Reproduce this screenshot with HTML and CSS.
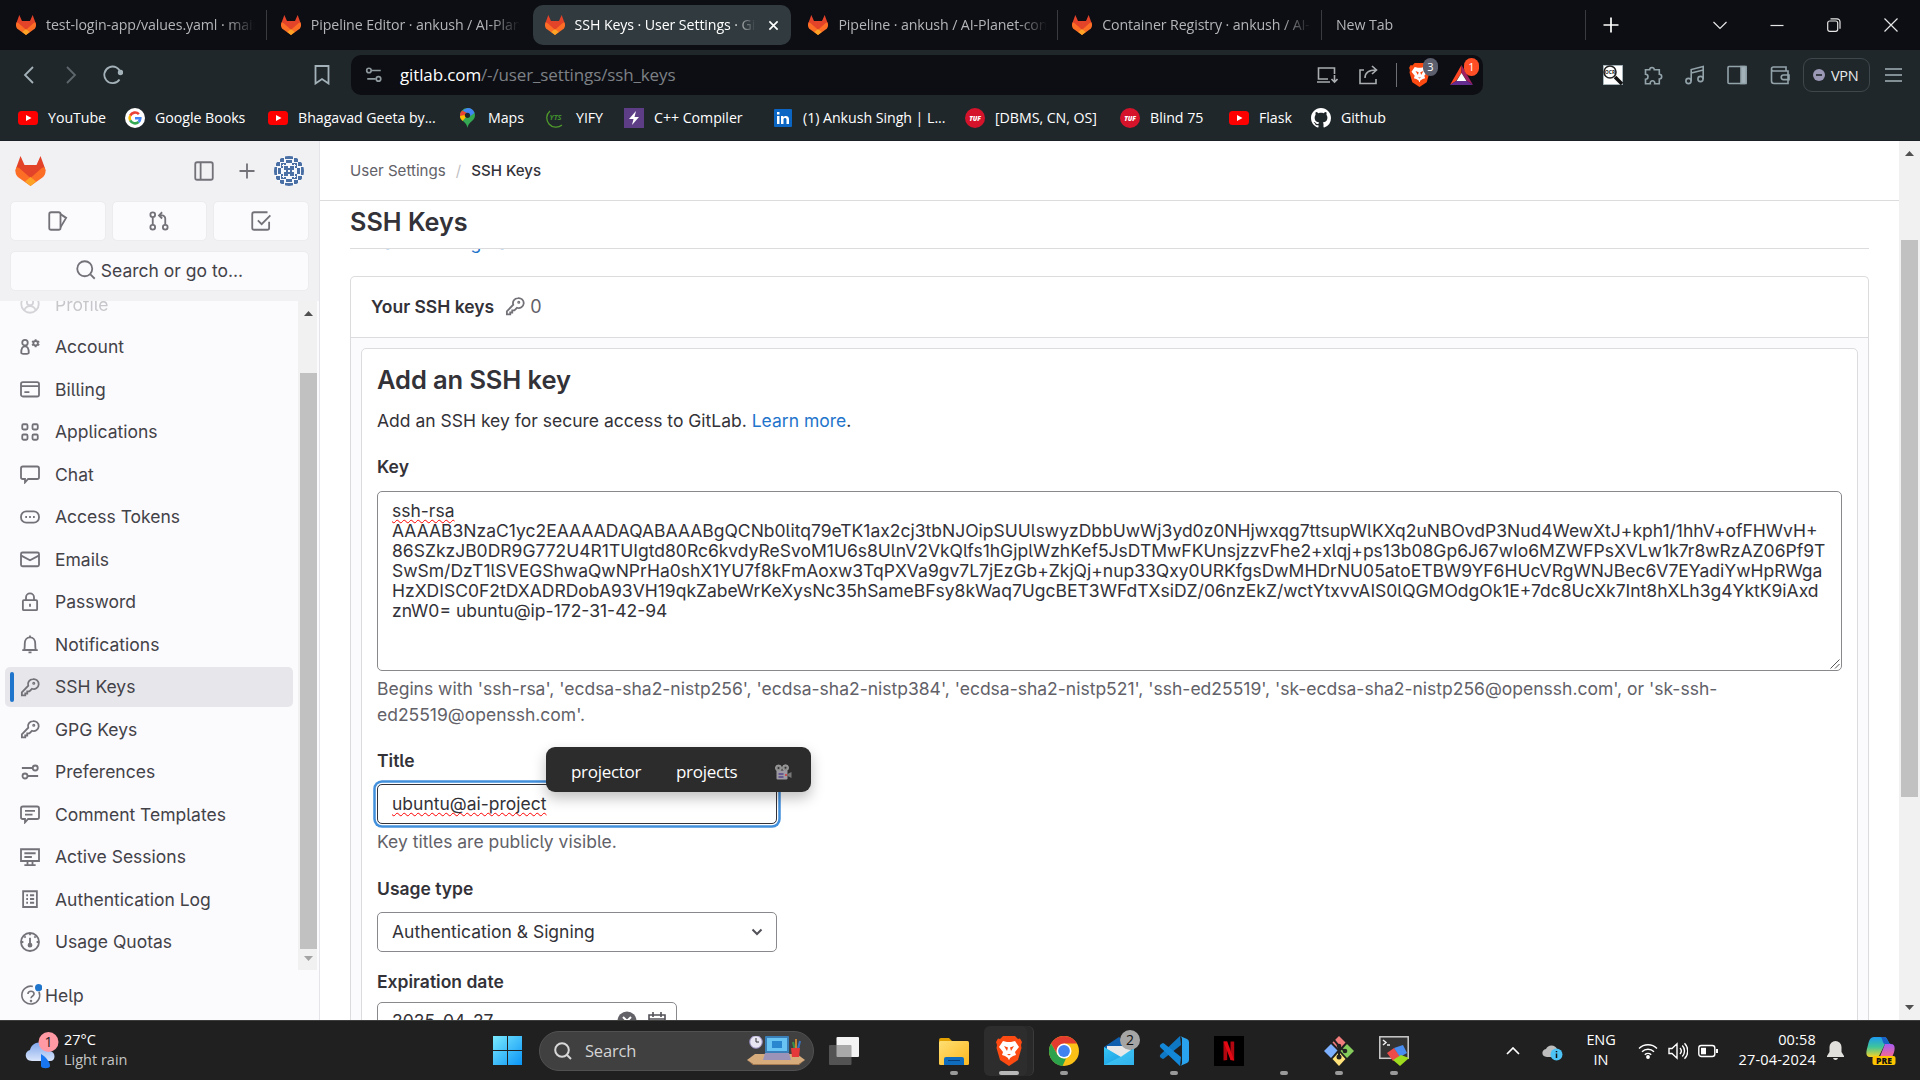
FILE: index.html
```html
<!DOCTYPE html>
<html lang="en">
<head>
<meta charset="utf-8">
<title>SSH Keys · User Settings · GitLab</title>
<link rel="stylesheet" href="styles.css">
</head>
<body>
<svg class="defs" aria-hidden="true">
  <defs>
    <linearGradient id="g-win" x1="0" y1="0" x2="1" y2="1"><stop offset="0" stop-color="#7aeaff"/><stop offset="1" stop-color="#0a94f5"/></linearGradient>
    <linearGradient id="g-cloud" x1="0" y1="0" x2="0" y2="1"><stop offset="0" stop-color="#7fa6ec"/><stop offset="1" stop-color="#d9e5fb"/></linearGradient>
    <linearGradient id="g-folder" x1="0" y1="0" x2="1" y2="1"><stop offset="0" stop-color="#ffdf73"/><stop offset="1" stop-color="#fcb81f"/></linearGradient>
    <linearGradient id="g-mail" x1="0" y1="0" x2="1" y2="1"><stop offset="0" stop-color="#35c8f5"/><stop offset="1" stop-color="#1490df"/></linearGradient>
    <linearGradient id="g-cop1" x1="0" y1="0" x2="0" y2="1"><stop offset="0" stop-color="#1d9bf0"/><stop offset=".5" stop-color="#3fc59a"/><stop offset="1" stop-color="#f5d327"/></linearGradient>
    <linearGradient id="g-cop2" x1="0" y1="0" x2="0" y2="1"><stop offset="0" stop-color="#a65cf2"/><stop offset="1" stop-color="#ff6a88"/></linearGradient>
  </defs>
  <symbol id="fox" viewBox="0 0 30 30">
    <path fill="#e24329" d="M5 0 1 11l-1 4 15 4 15-4-1-4L25 0l-4 9H9z"/>
    <path fill="#fc6d26" d="M1 11c-2 4-1 8 2 10.500L15 30l12-8.500c3-2.500 4-6.500 2-10.500L20 14l-5 8-5-8z"/>
    <path fill="#e24329" d="M1.500 10 9 9h12l7.500 1L15 22z"/>
    <path fill="#fca326" d="m9.500 25.500 5.500-4.500 5.500 4.500L15 30z"/>
  </symbol>
  <symbol id="yt" viewBox="0 0 20 14"><rect width="20" height="14" rx="3.500" fill="#f00"/><path fill="#fff" d="m8 4 5.500 3L8 10z"/></symbol>
  <symbol id="brave" viewBox="0 0 26 30">
    <path fill="#fb4a12" d="M7 0h12l3 3 2-.5L26 6l-1 3 .5 3-3.500 12L13 30l-9-6L.5 12 1 9 0 6l2-3.500 2 .5z"/>
    <path fill="#fff" d="m7 5 4 1h4l4-1 4 6-4 5 1 3-3 1-3 2-1 3-1-3-3-2-3-1 1-3-4-5z"/>
    <path fill="#fb4a12" d="m8 10 4 1.500-1 3.500zm10 0-4 1.500 1 3.500zm-7 8h4l-2 1.500zM10 22l3 2 3-2-3 5z"/>
  </symbol>
  <symbol id="i-key" viewBox="0 0 16 16"><path d="M10.300 1.700a4 4 0 1 1-.7 7.700L7.500 11.500H5.800v1.700H4.200v1.500H1.500v-2.500L6.600 7a4 4 0 0 1 3.700-5.300z"/><circle cx="11" cy="5" r=".5"/></symbol>
  <symbol id="tuf" viewBox="0 0 20 20"><circle cx="10" cy="10" r="10" fill="#d5142b"/><text x="10" y="12.500" text-anchor="middle" font-size="6.500" font-weight="800" font-style="italic" fill="#fff">TUF</text></symbol>
</svg>

<header class="browser">
  <div class="tabs">
    <div class="tab"><svg class="fav"><use href="#fox"/></svg><span>test-login-app/values.yaml · main</span></div><i class="sep"></i>
    <div class="tab"><svg class="fav"><use href="#fox"/></svg><span>Pipeline Editor · ankush / AI-Plan</span></div><i class="sep hid"></i>
    <div class="tab on"><svg class="fav"><use href="#fox"/></svg><span>SSH Keys · User Settings · GitLab</span><svg class="x" viewBox="0 0 12 12"><path d="m1.500 1.500 9 9m0-9-9 9"/></svg></div><i class="sep hid"></i>
    <div class="tab"><svg class="fav"><use href="#fox"/></svg><span>Pipeline · ankush / AI-Planet-con</span></div><i class="sep"></i>
    <div class="tab"><svg class="fav"><use href="#fox"/></svg><span>Container Registry · ankush / AI-P</span></div><i class="sep"></i>
    <div class="tab"><span>New Tab</span></div><i class="sep"></i>
    <svg class="plus" viewBox="0 0 16 16"><path d="M8 .5v15M.5 8h15"/></svg>
    <div class="win">
      <svg viewBox="0 0 14 14"><path d="m.5 4 6.500 6.500L13.500 4"/></svg>
      <svg viewBox="0 0 14 14"><path d="M.5 7.500h13"/></svg>
      <svg viewBox="0 0 14 14"><rect x=".7" y="3" width="10" height="10.300" rx="2"/><path d="M3.500.8H10a3 3 0 0 1 3 3v7"/></svg>
      <svg viewBox="0 0 14 14"><path d="m.5.500 13 13m0-13-13 13"/></svg>
    </div>
  </div>
  <div class="toolbar">
    <svg class="ti" viewBox="0 0 20 20"><path d="m15 2-8 8 8 8"/></svg>
    <svg class="ti dim" viewBox="0 0 20 20"><path d="m6 2 8 8-8 8"/></svg>
    <svg class="ti reload" viewBox="0 0 20 20"><path d="M16.500 14.500a8.300 8.300 0 1 1 1.300-6"/><circle cx="17.500" cy="7.500" r="1.800" fill="#a3b2b8"/></svg>
    <svg class="ti mark" viewBox="0 0 20 20"><path d="M3.500 1h13v17.500L10 14l-6.500 4.500z"/></svg>
    <div class="address">
      <svg class="tune" viewBox="0 0 16 16"><circle cx="3.500" cy="4" r="2"/><path d="M6 4h8M2 11.500h7.500"/><circle cx="12" cy="11.500" r="2"/></svg>
      <span class="url"><b>gitlab.com</b>/-/user_settings/ssh_keys</span>
      <svg class="ai" viewBox="0 0 22 20"><path d="M12 14H2.500V3h16v6M1 17h13M18.500 10v7m-3-3 3 3 3-3"/></svg>
      <svg class="ai" viewBox="0 0 22 20"><path d="M6 5H2v13.500h16V14M7 13c0-5 4-8 11-8m-4-4 4.500 4L14 9"/></svg>
      <i class="adiv"></i>
      <span class="badged"><svg width="21" height="24"><use href="#brave"/></svg><em class="gray">3</em></span>
      <span class="badged bat"><svg width="23" height="20" viewBox="0 0 23 20"><path fill="#ff4724" d="M11.500 0 0 20l6-4 5.500-8z"/><path fill="#9e1f63" d="m11.500 0 11.500 20-6-4-5.500-8z"/><path fill="#662d91" d="M0 20h23l-6-4H6z"/><path fill="#fff" d="m11.500 8 5 8h-10z"/></svg><em>1</em></span>
    </div>
    <div class="ext">
      <svg viewBox="0 0 20 20"><rect width="20" height="20" fill="#fff"/><circle cx="7" cy="7" r="6" stroke="#222"/><path stroke="#111" stroke-width="3.500" d="m12 12 7 7"/><text x="7" y="9" text-anchor="middle" font-size="5" font-weight="700" fill="#222">OCR</text></svg>
      <svg viewBox="0 0 20 20"><path d="M2.500 4.800H6.700a2.300 2.300 0 1 1 4.600 0h5v4.400a2.400 2.400 0 1 1 0 4.800v4.700h-4.600a2.300 2.300 0 1 0-4.400 0H2.500v-4.500a2.500 2.500 0 1 0 0-5z"/></svg>
      <svg viewBox="0 0 20 20"><circle cx="3.500" cy="16" r="2.600"/><circle cx="15.500" cy="14" r="2.600"/><path d="M6.200 16V4.500L18.200 1.500V14M6.200 8l12-3"/></svg>
      <svg viewBox="0 0 20 20"><rect x="1" y="1.500" width="18" height="17" rx="1"/><path fill="#a3b2b8" d="M14 1.500h5v17h-5z"/></svg>
      <svg viewBox="0 0 20 20"><path d="M16 6V2H3.500a2 2 0 0 0 0 4H18v12.500H4a2.500 2.500 0 0 1-2.500-2.500V4M19 10h-5.500a2.300 2.300 0 0 0 0 4.600H19z"/></svg>
    </div>
    <div class="vpn"><svg viewBox="0 0 12 12"><circle cx="6" cy="6" r="6" fill="#9a98b5"/><path stroke="#20272b" stroke-width="1.600" d="M3 6h6"/></svg>VPN</div>
    <svg class="menu" viewBox="0 0 17 14"><path d="M0 1h17M0 7h17M0 13h17"/></svg>
  </div>
  <nav class="marks">
    <a><svg class="yti"><use href="#yt"/></svg>YouTube</a>
    <a><svg viewBox="0 0 20 20"><circle cx="10" cy="10" r="10" fill="#fff"/><g fill="none" stroke-width="2.600"><path stroke="#ea4335" d="M5.200 7.600A5.400 5.400 0 0 1 13.900 6.200"/><path stroke="#fbbc05" d="M5.200 12.400a5.400 5.400 0 0 1 0-4.800"/><path stroke="#34a853" d="M13.600 14A5.400 5.400 0 0 1 5.200 12.400"/><path stroke="#4285f4" d="M10 10.200h5.300A5.400 5.400 0 0 1 13.600 14"/></g></svg>Google Books</a>
    <a><svg class="yti"><use href="#yt"/></svg>Bhagavad Geeta by...</a>
    <a><svg class="pin" viewBox="0 0 15 20"><path fill="#34a853" d="M7.500 20C7 14 0 13 0 7.500a7.500 7.500 0 0 1 15 0C15 13 8 14 7.500 20z"/><path fill="#4285f4" d="M7.500 0A7.500 7.500 0 0 1 14.500 5L9 9 3 2z"/><path fill="#ea4335" d="M2 2.500A7.500 7.500 0 0 0 0 8l4 1 3-4z"/><path fill="#fbbc05" d="M0 8c0 2 1 3.500 2.500 5L9 6z"/><circle cx="7.500" cy="7.300" r="2.600" fill="#20272b"/></svg>Maps</a>
    <a><svg class="yts" viewBox="0 0 18 20"><path fill="none" stroke="#4f9a2b" stroke-width="1.300" d="M4 3A9 9 0 1 0 16 17"/><text x="9.500" y="12" text-anchor="middle" font-size="7.500" font-weight="700" font-style="italic" fill="#3f8f2c">YTS</text></svg>YIFY</a>
    <a><svg viewBox="0 0 20 20"><rect width="20" height="20" fill="#5c3d86"/><path fill="#fff" d="M12 3 5 11h4.500L8 17l7-8h-4.500z"/></svg>C++ Compiler</a>
    <a><svg class="li" viewBox="0 0 18 18"><rect width="18" height="18" rx="1" fill="#0a66c2"/><path fill="#fff" d="M3 7h2.500v8H3zm0-4h2.500v2.500H3zM7 7h2.400v1.200C10.500 6.400 15 6.300 15 10v5h-2.500v-4.500c0-2-3-2-3 0V15H7z"/></svg>(1) Ankush Singh | L...</a>
    <a><svg><use href="#tuf"/></svg>[DBMS, CN, OS]</a>
    <a><svg><use href="#tuf"/></svg>Blind 75</a>
    <a><svg class="yti"><use href="#yt"/></svg>Flask</a>
    <a><svg viewBox="0 0 16 16"><path fill="#fff" d="M8 0C3.580 0 0 3.580 0 8c0 3.540 2.290 6.530 5.470 7.590.4.070.55-.17.550-.38 0-.19-.01-.82-.01-1.490-2.010.37-2.530-.49-2.690-.94-.09-.23-.48-.94-.82-1.130-.28-.15-.68-.52-.01-.53.63-.01 1.080.58 1.230.82.72 1.210 1.870.87 2.330.66.070-.52.280-.87.510-1.070-1.780-.2-3.640-.89-3.640-3.950 0-.87.310-1.590.82-2.150-.08-.2-.36-1.020.08-2.120 0 0 .67-.21 2.200.82.640-.18 1.320-.27 2-.27s1.360.09 2 .27c1.530-1.040 2.200-.82 2.200-.82.440 1.100.16 1.920.08 2.120.51.56.82 1.270.82 2.150 0 3.070-1.870 3.750-3.650 3.950.29.25.54.73.54 1.480 0 1.070-.01 1.930-.01 2.200 0 .21.150.46.550.38A8 8 0 0 0 16 8c0-4.420-3.580-8-8-8z"/></svg>Github</a>
  </nav>
</header>

<div class="page">
  <aside class="side">
    <div class="side-top">
      <div class="brand">
        <svg class="logo"><use href="#fox"/></svg>
        <svg class="ic" viewBox="0 0 16 16"><rect x="1" y="1" width="14" height="14" rx="1.500"/><path d="M5.300 1v14"/></svg>
        <svg class="ic add" viewBox="0 0 16 16"><path d="M8 2v12M2 8h12"/></svg>
        <svg class="avatar" viewBox="0 0 30 30"><defs><clipPath id="cav"><circle cx="15" cy="15" r="15"/></clipPath></defs><g clip-path="url(#cav)"><rect width="30" height="30" fill="#f5f7fa"/><path fill="#4a6fa5" d="M11 0h8v3h-8zM11 27h8v3h-8zM0 11h3v8H0zM27 11h3v8h-3zM6 2h4v4H6zM20 2h4v4h-4zM2 6h4v4H2zM24 6h4v4h-4zM2 20h4v4H2zM24 20h4v4h-4zM6 24h4v4H6zM20 24h4v4h-4zM7 7h5v5H7zM18 7h5v5h-5zM7 18h5v5H7zM18 18h5v5h-5zM12 4h6v3h-6zM12 23h6v3h-6zM4 12h3v6H4zM23 12h3v6h-3z"/><path stroke="#4a6fa5" stroke-width="2" d="M9 13h12M9 17h12M13 9v12M17 9v12"/><path stroke="#f5f7fa" d="M8 9.500h14M8 20.500h14M9.500 8v14M20.500 8v14"/></g></svg>
      </div>
      <div class="trio">
        <span><svg class="ic" viewBox="0 0 16 16"><rect x="1" y="1" width="9" height="14" rx="1.500"/><path d="m10 2.500 4.500 3L10 13"/></svg></span>
        <span><svg class="ic" viewBox="0 0 16 16"><circle cx="3" cy="3" r="1.900"/><circle cx="3" cy="13" r="1.900"/><circle cx="13" cy="13" r="1.900"/><path d="M3 5v6M13 11V6a2.500 2.500 0 0 0-2.500-2.500H8.500M10.500 1 8 3.500 10.500 6"/></svg></span>
        <span><svg class="ic" viewBox="0 0 16 16"><path d="M14.500 8.500v5a1.500 1.500 0 0 1-1.500 1.500H2.500A1.500 1.500 0 0 1 1 13.500v-11A1.500 1.500 0 0 1 2.500 1h10.700M5.500 7.500 8.500 10.500 15.500 3.500"/></svg></span>
      </div>
      <div class="search"><svg class="ic" viewBox="0 0 16 16"><circle cx="7" cy="7" r="6"/><path d="m11.500 11.500 3.500 3.500"/></svg>Search or go to...</div>
    </div>
    <div class="side-mid">
      <ul class="nav">
        <li class="fade"><svg class="ic" viewBox="0 0 16 16"><circle cx="8" cy="8" r="7"/><circle cx="8" cy="6.500" r="2.500"/><path d="M3.500 13a4.700 4.700 0 0 1 9 0"/></svg>Profile</li>
        <li><svg class="ic" viewBox="0 0 16 16"><circle cx="4" cy="4.500" r="2.200"/><path d="M1 12.500c0-3 1-5 3-5s3 2 3 5c0 1.300-6 1.300-6 0z"/><circle cx="12.500" cy="5" r="1.800"/><path d="M12.500 1.800v1M12.500 7.200v1M9.600 3.400l.9.500M14.500 6l.9.500M9.600 6.600l.9-.5M14.500 4l.9-.5"/></svg>Account</li>
        <li><svg class="ic" viewBox="0 0 16 16"><rect x=".8" y="2.500" width="14.400" height="11.500" rx="1.500"/><path d="M.8 5.700h14.400M3.500 10.500h4"/></svg>Billing</li>
        <li><svg class="ic" viewBox="0 0 16 16"><rect x="1.800" y="1.800" width="4.200" height="4.200" rx="1"/><rect x="10" y="1.800" width="4.200" height="4.200" rx="1"/><rect x="1.800" y="10" width="4.200" height="4.200" rx="1"/><rect x="10" y="10" width="4.200" height="4.200" rx="1"/></svg>Applications</li>
        <li><svg class="ic" viewBox="0 0 16 16"><path d="M2.300 2h11.400a1.500 1.500 0 0 1 1.500 1.500v7a1.500 1.500 0 0 1-1.500 1.500H6.500L4 14.700V12H2.300a1.500 1.500 0 0 1-1.500-1.500v-7A1.500 1.500 0 0 1 2.300 2z"/></svg>Chat</li>
        <li><svg class="ic" viewBox="0 0 16 16"><rect x=".8" y="3.500" width="14.400" height="9" rx="4.200"/><path stroke-width="1.600" d="M4.200 8h1.400M7.300 8h1.400M10.400 8h1.400"/></svg>Access Tokens</li>
        <li><svg class="ic" viewBox="0 0 16 16"><rect x=".8" y="2.800" width="14.400" height="11" rx="1.200"/><path d="M1 5.300 8 9l7-3.700"/></svg>Emails</li>
        <li><svg class="ic" viewBox="0 0 16 16"><rect x="2.300" y="6.500" width="11.400" height="8" rx=".8"/><path d="M4.800 6.500V4.300a3.200 3.200 0 0 1 6.400 0v2.200M8 9.300v2.400"/></svg>Password</li>
        <li><svg class="ic" viewBox="0 0 16 16"><path d="M3.300 12.800c.5-1 .5-3 .5-5 0-3 1.700-5.100 4.200-5.100s4.200 2.100 4.200 5.100c0 2 0 4 .5 5zM1.800 12.900h12.400M8 1.200v1.500M6.800 14.700h2.400"/></svg>Notifications</li>
        <li class="cur"><svg class="ic"><use href="#i-key"/></svg>SSH Keys</li>
        <li><svg class="ic"><use href="#i-key"/></svg>GPG Keys</li>
        <li><svg class="ic" viewBox="0 0 16 16"><circle cx="12.200" cy="4.800" r="2"/><circle cx="4" cy="11.200" r="2"/><path d="M1.500 4.800h8.700M6 11.200h8.500"/></svg>Preferences</li>
        <li><svg class="ic" viewBox="0 0 16 16"><path d="M2.300 2h11.400a1.500 1.500 0 0 1 1.500 1.500v7a1.500 1.500 0 0 1-1.500 1.500H6.500L4 14.700V12H2.300a1.500 1.500 0 0 1-1.500-1.500v-7A1.500 1.500 0 0 1 2.300 2zM4 5.500h8M4 8.500h6"/></svg>Comment Templates</li>
        <li><svg class="ic" viewBox="0 0 16 16"><path d="M.8 1.800h14.400v9.400H.8zM3.500 5h9M3.500 8h6M3.500 14.500h9M6 11.200v3M10 11.200v3"/></svg>Active Sessions</li>
        <li><svg class="ic" viewBox="0 0 16 16"><path d="M2.500 1.800h11v12.600h-11zM5 5h1.400M8 5h3.300M5 8h1.400M8 8h3.300M5 11h1.400M8 11h3.300"/></svg>Authentication Log</li>
        <li><svg class="ic" viewBox="0 0 16 16"><circle cx="8" cy="8" r="7.200"/><path d="M8 4.500V10M8 1v1.500M1 8h1.700M13.300 8H15M3.500 3.500l1 1M12.500 3.500l-1 1"/><circle cx="8" cy="10.500" r="1.200" fill="#737278"/></svg>Usage Quotas</li>
      </ul>
      <div class="sbar"><i class="up"></i><i class="thumb"></i><i class="down"></i></div>
    </div>
    <div class="help"><svg viewBox="0 0 18 18"><path d="M15.500 6.200A7.300 7.300 0 1 1 10.500 2"/><path d="M6.500 8.200c0-3 5-3 5 0 0 1.700-2.500 1.500-2.500 3.500"/><circle cx="9" cy="14" r=".4"/><circle cx="15.300" cy="3" r="3" fill="#1f75cb" stroke="none"/></svg>Help</div>
  </aside>

  <main class="main">
    <div class="crumbs"><span>User Settings</span><i>/</i><b>SSH Keys</b></div>
    <h1>SSH Keys</h1>
    <div class="under"><span>instance configuration.</span></div>
    <section class="card">
      <div class="card-head"><b>Your SSH keys</b><svg class="ic"><use href="#i-key"/></svg><span>0</span></div>
      <div class="card-body">
        <form class="form">
          <h2>Add an SSH key</h2>
          <p class="lead">Add an SSH key for secure access to GitLab. <a>Learn more</a>.</p>
          <label>Key</label>
          <div class="area"><span class="spell">ssh-rsa</span><br>AAAAB3NzaC1yc2EAAAADAQABAAABgQCNb0litq79eTK1ax2cj3tbNJOipSUUlswyzDbbUwWj3yd0z0NHjwxqg7ttsupWlKXq2uNBOvdP3Nud4WewXtJ+kph1/1hhV+ofFHWvH+<br>86SZkzJB0DR9G772U4R1TUIgtd80Rc6kvdyReSvoM1U6s8UlnV2VkQlfs1hGjplWzhKef5JsDTMwFKUnsjzzvFhe2+xlqj+ps13b08Gp6J67wIo6MZWFPsXVLw1k7r8wRzAZ06Pf9T<br>SwSm/DzT1lSVEGShwaQwNPrHa0shX1YU7f8kFmAoxw3TqPXVa9gv7L7jEzGb+ZkjQj+nup33Qxy0URKfgsDwMHDrNU05atoETBW9YF6HUcVRgWNJBec6V7EYadiYwHpRWga<br>HzXDISC0F2tDXADRDobA93VH19qkZabeWrKeXysNc35hSameBFsy8kWaq7UgcBET3WFdTXsiDZ/06nzEkZ/wctYtxvvAIS0lQGMOdgOk1E+7dc8UcXk7Int8hXLh3g4YktK9iAxd<br>znW0= ubuntu@ip-172-31-42-94<svg class="grip" viewBox="0 0 10 10"><path d="M.5 9.500 9.500.5M5 9.500 9.500 5"/></svg></div>
          <p class="hint">Begins with 'ssh-rsa', 'ecdsa-sha2-nistp256', 'ecdsa-sha2-nistp384', 'ecdsa-sha2-nistp521', 'ssh-ed25519', 'sk-ecdsa-sha2-nistp256@openssh.com', or 'sk-ssh-<br>ed25519@openssh.com'.</p>
          <label>Title</label>
          <div class="field focus"><span class="spell">ubuntu@ai-project</span>
            <div class="suggest"><span class="w1">projector</span><span class="w2">projects</span><svg viewBox="0 0 18 16"><circle cx="4.500" cy="4" r="3" fill="#8a8a8a" stroke="#aaa" stroke-width=".8"/><circle cx="11.500" cy="3.800" r="3" fill="#8a8a8a" stroke="#aaa" stroke-width=".8"/><circle cx="4.500" cy="4" r="1" fill="#333"/><circle cx="11.500" cy="3.800" r="1" fill="#333"/><rect x="2.500" y="6.500" width="11" height="9" rx="1" fill="#9d9aa3"/><path fill="#777" d="m13.500 10 4-2v6l-4-2z"/><path stroke="#55468a" stroke-width="1.300" d="M4.500 10h5M4.500 13h5"/><circle cx="12" cy="11" r="1" fill="#d33"/></svg></div>
          </div>
          <p class="hint one">Key titles are publicly visible.</p>
          <label>Usage type</label>
          <div class="field select"><span>Authentication &amp; Signing</span><svg viewBox="0 0 12 12"><path d="M1.500 3.500 6 8l4.500-4.500"/></svg></div>
          <label class="exp">Expiration date</label>
          <div class="field date"><span>2025-04-27</span><svg viewBox="0 0 20 20"><circle cx="10" cy="10" r="9.500" fill="#626168"/><path stroke="#fff" stroke-width="2" d="m6 6 8 8m0-8-8 8"/></svg><svg class="cal" viewBox="0 0 18 18"><path d="M1 3h16v14H1zM1 7h16M5 0v5M13 0v5"/></svg></div>
        </form>
      </div>
    </section>
  </main>
  <div class="pbar"><i class="up"></i><i class="thumb"></i><i class="down on"></i></div>
</div>

<footer class="task">
  <div class="weather">
    <svg viewBox="0 0 34 38"><path fill="url(#g-cloud)" d="M5 18a9 9 0 0 1 14-6 8 8 0 0 1 6 7c6 1 6 10 0 10H7c-8 0-8-10-2-11z"/><path fill="#1976f2" d="M16 22c5 3 9 8 9 12 0 3-9 3-9 0z"/><circle cx="23.500" cy="10" r="10" fill="#ff99a4"/><text x="23.500" y="15" text-anchor="middle" font-size="14" fill="#222">1</text></svg>
    <div><span>27°C</span><span class="mut">Light rain</span></div>
  </div>
  <div class="apps">
    <svg class="start" viewBox="0 0 29 29"><path fill="url(#g-win)" d="M0 0h14v14H0zM15 0h14v14H15zM0 15h14v14H0zM15 15h14v14H15z"/></svg>
    <div class="pill"><svg class="mag" viewBox="0 0 18 18"><circle cx="8" cy="8" r="6.800"/><path d="m13 13 4 4"/></svg><span>Search</span>
      <svg class="desk" viewBox="0 0 58 30"><path fill="#d6ac7c" d="M8 18h42l8 6-6 4H6l-6-4z"/><path fill="#a87c50" d="m0 24 6 4h46l6-4-6 5H6z"/><rect x="18" y="0" width="24" height="17" rx="1" fill="#3a7fb8"/><rect x="20" y="2" width="20" height="13" fill="#69c4f4"/><rect x="25" y="5" width="10" height="7" fill="#2a86cf"/><path fill="#9b93b8" d="M18 17h24l2 7H16z"/><circle cx="9" cy="6" r="6.300" fill="#e9e6f4" stroke="#8d83b6"/><path stroke="#333" d="M9 2v4h3"/><path stroke="#3b8f4a" stroke-width="2" d="m46 6 2 8"/><path stroke="#c98432" stroke-width="2" d="M49 3v10"/><path stroke="#3a74c4" stroke-width="2" d="m53 5-2 8"/><path fill="#e5383b" d="M44 12h9l-1 9h-7z"/></svg></div>
    <svg class="tv" viewBox="0 0 30 28"><rect x="7.500" width="22.500" height="20" rx="1" fill="#f4f4f4"/><rect y="8" width="22.500" height="20" rx="1" fill="#777" fill-opacity=".6"/></svg>
    <div class="app a1"><svg viewBox="0 0 30 30"><path fill="#e2a100" d="M0 4q0-2 2-2h8l3 3v5H0z"/><rect y="5" width="30" height="24" rx="1.500" fill="url(#g-folder)"/><path fill="#0f6cbd" d="M5 29v-6q0-2 2-2h16q2 0 2 2v6z"/><path stroke="#063f78" d="M9 24.500h12"/></svg><i></i></div>
    <div class="app sel"><svg viewBox="0 0 26 30"><use href="#brave"/></svg><i></i></div>
    <div class="app"><svg viewBox="0 0 30 30"><circle cx="15" cy="15" r="15" fill="#fbc116"/><path fill="#e33b2e" d="M2 7.500A15 15 0 0 1 28 7.500H15l-6.500 11z"/><path fill="#2da24c" d="M2 7.500 8.500 18.700 15 22.500h2L13.500 30A15 15 0 0 1 2 7.500z"/><circle cx="15" cy="15" r="7.500" fill="#fff"/><circle cx="15" cy="15" r="5.900" fill="#3f82f0"/></svg><i></i></div>
    <div class="app"><svg class="over" viewBox="0 0 30 30"><path fill="#0f5fae" d="M0 11 15 1l15 10v6H0z"/><path fill="#e8e8e8" d="M3 10h24v7l-12 6-12-6z"/><path fill="url(#g-mail)" d="M0 11l17 10 13-9v17H0z"/><path fill="#4fd3fa" d="M0 29 17 20.500 30 12v17z" opacity=".5"/><circle cx="26" cy="4" r="10" fill="#a5a5a5"/><text x="26" y="9" text-anchor="middle" font-size="14" fill="#111">2</text></svg></div>
    <div class="app"><svg viewBox="0 0 30 30"><path fill="#0f78c4" d="M21 0 1.500 18.500q-1.500 1.500 0 3l1.500 1q1 .8 2 0L22 9z"/><path fill="#1488d8" d="M21 30 1.500 11.500q-1.500-1.500 0-3l1.500-1q1-.8 2 0L22 21z"/><path fill="#2aa3ee" d="m21 0 7 3q2 1 2 3v18q0 2-2 3l-7 3q2-1 2-3V3q0-2-2-3z"/></svg><i></i></div>
    <div class="app"><svg viewBox="0 0 30 30"><path d="M0 0h30v30H0z" fill="#000"/><path fill="#b20710" d="M9.500 5.500h3.700V24l-3.700.5zM16.500 5.500h3.700v19l-3.700-.5z"/><path fill="#e50914" d="M9.500 5.500h3.700l7 19-3.700-.5z"/></svg></div>
    <div class="app"><i></i></div>
    <div class="app"><svg viewBox="0 0 30 30"><path fill="#f27d7d" d="m15 0 6.500 6.500-6.500 7-6.500-7z"/><path fill="#7db0ff" d="m7 8 6.500 6.500L7 22l-7-7z"/><path fill="#86cc5c" d="m23 8 7 7-7 7-6.500-7z"/><path fill="#ffe27a" d="m15 16 6.500 7L15 30l-6.500-7z"/><path stroke="#222" stroke-width="2" d="m10 4 5 6v11M15 11l6 4"/><circle cx="15" cy="10" r="2.300" fill="#222"/><circle cx="15" cy="21" r="2.500" fill="#222"/><circle cx="21" cy="15" r="2.300" fill="#222"/></svg><i></i></div>
    <div class="app"><svg viewBox="0 0 30 30"><rect x=".8" y=".8" width="28.400" height="21.500" fill="#333" stroke="#ccc" stroke-width="1.500"/><path stroke="#eee" stroke-width="1.500" d="m4 4 3 2.500L4 9M8 9h3"/><path fill="#ef4a4a" d="m8 17 7-5 6 8-7 5z"/><path fill="#4a8df0" d="m15 12 9-3 4 8-7 4z"/><path fill="#9fdc1f" d="m14 24 8-5 8 3-9 8z"/></svg><i></i></div>
  </div>
  <div class="tray">
    <svg class="chev" viewBox="0 0 14 8"><path d="m1 7 6-6 6 6"/></svg>
    <svg class="cl" viewBox="0 0 21 18"><path fill="#bdbdbd" d="M4 6a6 6 0 0 1 11 0c5 1 4 8 0 8H5C-1 14-1 7 4 6z"/><circle cx="14.500" cy="11.500" r="6" fill="#4cc2f5"/><path stroke="#111" stroke-width="1.500" d="M14.500 10.500v4.500M14.500 8v1.300"/></svg>
    <div class="lang"><span>ENG</span><span>IN</span></div>
    <svg class="tr" viewBox="0 0 20 16"><path d="M1 5.500a12.800 12.800 0 0 1 18 0M4 8.800a8.500 8.500 0 0 1 12 0M6.800 11.800a4.600 4.600 0 0 1 6.400 0"/><circle cx="10" cy="14" r="1.200" fill="#fff"/></svg>
    <svg class="tr" viewBox="0 0 20 18"><path d="M1 6.500h3l5-4.700v14.400L4 11.500H1zM12 6a4.500 4.500 0 0 1 0 6M14.300 3.500a8 8 0 0 1 0 11M16.500 1.200a11 11 0 0 1 0 15.600"/></svg>
    <svg class="tr" viewBox="0 0 20 16"><rect x=".8" y="2.500" width="16" height="11" rx="2.500"/><rect x="3" y="4.800" width="5" height="6.500" fill="#fff" stroke="none"/><path stroke-width="2" d="M19 6v4"/></svg>
    <div class="clock"><span>00:58</span><span>27-04-2024</span></div>
    <svg class="bell" viewBox="0 0 17 19"><path fill="#e2e0dc" d="M8.500 0a6 6 0 0 1 6 6v5l2.500 4v1H0v-1l2.500-4V6a6 6 0 0 1 6-6zM6 17h5q-.5 2-2.500 2T6 17z"/></svg>
    <svg class="cop" viewBox="0 0 30 28"><path fill="url(#g-cop1)" d="M8 0h10c4 0 4 7 7 7h-6l-5 10q-1 3-4 3H4c-6 0-3-8-2-12s2-8 6-8z"/><path fill="#1b62c8" d="M14 0h4c4 0 4 7 7 7h-6c-3 0-2-7-5-7z"/><path fill="url(#g-cop2)" d="M19 7h6c6 0 3 9 2 11s-2 3-6 3H11q3 0 4-4z"/><rect x="6.500" y="19" width="23" height="9" rx="2" fill="#fdc400"/><text x="18" y="26.500" text-anchor="middle" font-size="8.500" font-weight="800" fill="#111">PRE</text></svg>
  </div>
</footer>
</body>
</html>
```
FILE: styles.css
```css
* { box-sizing: border-box; }
body {
  margin: 0; width: 1920px; height: 1080px; overflow: hidden;
  display: flex; flex-direction: column;
  font-family: "Open Sans", "Noto Sans", sans-serif; color: #333238; background: #fff;
}
svg { display: block; flex: none; fill: none; }
i, em { font-style: normal; }
.defs { position: absolute; width: 0; height: 0; }
symbol text { font-family: "Open Sans", sans-serif; }

/* Browser chrome */
.browser { height: 141px; flex: none; background: #20272b; border-bottom: 1px solid #1b1f26; }
.tabs { height: 50px; background: #0d0e13; display: flex; align-items: center; padding-left: 5px; }
.tab { width: 258px; height: 40px; display: flex; align-items: center; gap: 10px; padding-left: 12px; border-radius: 10px; font-size: 14.2px; letter-spacing: -.1px; color: #b3b5b8; white-space: nowrap; }
.tab span { width: 209px; overflow: hidden; padding-bottom: 2px; -webkit-mask-image: linear-gradient(90deg, #000 86%, transparent 100%); mask-image: linear-gradient(90deg, #000 86%, transparent 100%); }
.tab:first-child { padding-left: 11px; }
.tab.on { background: #313a3f; color: #fff; }
.tab.on span { width: 181px; }
.fav { width: 20px; height: 20px; }
.x { width: 11px; height: 11px; margin-left: 2px; stroke: #fff; stroke-width: 1.800; }
.sep { width: 1px; height: 30px; margin: 0 2px 0 2.800px; background: #3a3b3f; }
.sep.hid { visibility: hidden; }
.plus { width: 16px; height: 16px; margin-left: 15.500px; stroke: #fff; stroke-width: 1.700; }
.win { display: flex; gap: 43px; margin-left: 94px; }
.win svg { width: 14px; height: 14px; stroke: #e6e6e6; stroke-width: 1.200; }
.toolbar { height: 50px; display: flex; align-items: center; padding-left: 18px; }
.ti { width: 20px; height: 20px; stroke: #a3b2b8; stroke-width: 1.800; margin-right: 23px; }
.ti.dim { stroke: #5d676c; margin-right: 22px; }
.ti.mark { margin: 0 19px 0 166px; }
.address { width: 1132px; height: 40px; border-radius: 10px; background: #0d0e13; display: flex; align-items: center; padding-left: 14px; }
.tune { width: 18px; height: 18px; stroke: #8f9a9f; stroke-width: 1.500; }
.url { font-size: 17px; letter-spacing: -.130px; color: #7d8186; margin-left: 17px; padding-bottom: 2px; width: 916px; }
.url b { font-weight: 400; color: #fff; }
.ai { width: 22px; height: 20px; stroke: #a9adb0; stroke-width: 1.600; margin-right: 20px; }
.adiv { width: 1px; height: 24px; background: #6c7074; margin-left: -4px; }
.badged { position: relative; margin-left: 12px; }
.badged.bat { margin-left: 20px; }
.badged em { position: absolute; left: 14px; top: -5px; width: 15px; height: 18px; border-radius: 8px; background: #ff4d26; color: #fff; font-size: 11px; line-height: 18px; text-align: center; }
.badged.bat em { top: -7px; }
.badged em.gray { background: #5b5f6d; }
.ext { display: flex; gap: 22px; margin-left: 120px; }
.ext svg { width: 20px; height: 20px; stroke: #93a3aa; stroke-width: 1.600; }
.ext svg:first-child { margin-right: -2px; }
.ext svg:last-child { margin-left: 1px; }
.ext svg text { stroke: none; }
.vpn { width: 67px; height: 34px; margin-left: 13px; border: 1px solid #3d474c; border-radius: 9px; display: flex; align-items: center; gap: 6px; padding-left: 9px; color: #e8ebec; font-size: 14.500px; letter-spacing: -.3px; }
.vpn svg { width: 12px; height: 12px; }
.menu { width: 17px; height: 14px; margin-left: 15px; stroke: #a3b2b8; stroke-width: 1.500; }
.marks { height: 34px; display: grid; align-items: center; padding-left: 18px; grid-template-columns: 107px 143px 192px 86px 78px 150px 191px 155px 109px 82px 90px; color: #fff; font-size: 14.2px; letter-spacing: -.04px; white-space: nowrap; }
.marks a { display: flex; align-items: center; gap: 10px; }
.marks svg { width: 20px; height: 20px; position: relative; top: 1px; }
.marks svg.yti { height: 14px; }
.marks svg.pin { width: 15px; margin-right: 3px; }
.marks svg.yts { width: 18px; margin-right: 2px; }
.marks svg.li { width: 18px; height: 18px; margin-right: 1px; }

/* GitLab page */
.page { flex: 1; min-height: 0; display: flex; font-family: Inter, "Liberation Sans", sans-serif; font-feature-settings: "cv05"; font-size: 17.5px; }
.side { width: 320px; flex: none; border-right: 1px solid #e5e5e9; background: #fbfafd; display: flex; flex-direction: column; color: #434248; }
.ic { width: 20px; height: 20px; stroke: #737278; stroke-width: 1.450; }
.side-top { height: 160px; background: #f1f1f4; padding: 15px 10px 0; }
.brand { display: flex; align-items: center; padding: 0 5px; }
.logo { width: 31px; height: 30px; margin-right: 148px; }
.ic.add { margin: 0 17px 0 23px; }
.avatar { width: 30px; height: 30px; }
.trio { display: grid; grid-template-columns: repeat(3, 1fr); gap: 6px; margin: 15px 0 10px; }
.trio span, .search { height: 40px; border: 1px solid #ececef; border-radius: 5px; background: #fbfafd; display: flex; align-items: center; justify-content: center; }
.search { gap: 5px; padding-bottom: 2px; }
.side-mid { height: 669px; display: flex; overflow: hidden; }
.nav { list-style: none; margin: -17px 5px 0; padding: 0; width: 288px; display: flex; flex-direction: column; gap: 2.5px; }
.nav li { height: 40px; flex: none; display: flex; align-items: center; gap: 15px; padding-left: 15px; border-radius: 5px; }
.nav li.fade { opacity: .28; }
.nav li.cur { background: #e7e7eb; padding-left: 5px; }
.nav li.cur::before { content: ""; width: 4px; height: 30px; border-radius: 2px; background: #1f75cb; margin-right: -9px; }
.sbar { width: 19px; padding-left: 2px; background: #f1f1f1; display: flex; flex-direction: column; }
.sbar .thumb { width: 17px; height: 576px; flex: none; background: #c1c1c1; }
.up, .down { display: block; flex: none; height: 72px; }
.down { height: 21px; }
.up::before, .down::before { content: ""; display: block; width: 9px; height: 5px; margin: 10px auto 0; background: #505050; clip-path: polygon(50% 0, 100% 100%, 0 100%); }
.down::before { background: #a3a3a3; margin-top: 7px; clip-path: polygon(0 0, 100% 0, 50% 100%); }
.help { display: flex; align-items: center; height: 50px; padding-left: 20px; gap: 3px; }
.help svg { width: 22px; height: 22px; stroke: #737278; stroke-width: 1.300; }
.main { flex: 1; min-width: 0; overflow: hidden; background: #fff; }
.crumbs { height: 60px; border-bottom: 1px solid #dcdcde; display: flex; align-items: center; padding-left: 30px; font-size: 15.1px; color: #626168; }
.crumbs i { margin: 0 10px; color: #bfbfc3; }
.crumbs b { font-weight: 500; color: #333238; }
h1 { margin: 0 30px; height: 48px; border-bottom: 1px solid #dcdcde; font-size: 25.2px; font-weight: 600; line-height: 43px; }
.under { height: 4px; overflow: hidden; margin: 0 30px 23px; padding-left: 4px; color: #1f75cb; display: flex; align-items: flex-end; }
.under span { line-height: 20px; }
.card { margin: 0 30px; border: 1px solid #dcdcde; border-bottom: 0; border-radius: 5px 5px 0 0; background: #fbfafd; }
.card-head { height: 61px; display: flex; align-items: center; padding: 0 0 2px 20px; background: #fff; border-bottom: 1px solid #dcdcde; border-radius: 5px 5px 0 0; }
.card-head b { font-weight: 600; }
.card-head .ic { margin: 0 5px 0 11px; }
.card-head span { color: #626168; font-size: 18px; }
.card-body { padding: 10px 10px 0; }
.form { height: 800px; border: 1px solid #dcdcde; border-radius: 5px 5px 0 0; background: #fff; padding: 14px 15px 0; }
h2 { margin: 0; font-size: 25.5px; font-weight: 600; line-height: 33px; letter-spacing: -.1px; }
.lead { margin: 12px 0 22px; line-height: 26px; }
.lead a { color: #1f75cb; }
label { display: block; font-weight: 600; line-height: 22px; }
.area { position: relative; width: 1465px; height: 180px; margin-top: 13px; border: 1px solid #89888d; border-radius: 5px; padding: 9px 14px; line-height: 20px; white-space: nowrap; }
.grip { position: absolute; right: 1px; bottom: 1px; width: 10px; height: 10px; stroke: #555; }
.spell { text-decoration: underline wavy #f00 1px; text-underline-offset: 2px; text-decoration-skip-ink: none; }
.hint { margin: 5px 0 22px; line-height: 26px; color: #626168; }
.field { height: 40px; width: 400px; border: 1px solid #89888d; border-radius: 5px; padding: 0 14px 1px; display: flex; align-items: center; margin-top: 12px; }
.field.focus { position: relative; border-color: #333238; box-shadow: 0 0 0 1.250px #fff, 0 0 0 3.750px #428fdc; }
.suggest { position: absolute; left: 168px; top: -38px; width: 265px; height: 45px; border-radius: 9px; background: #2c2c2c; box-shadow: 0 6px 14px rgba(0,0,0,.25); color: #fff; font: 17px "Open Sans", sans-serif; display: flex; align-items: center; padding-left: 25px; padding-top: 4px; }
.suggest .w1 { width: 105px; letter-spacing: -.3px; }
.suggest .w2 { width: 98px; letter-spacing: -.3px; }
.suggest svg { width: 18px; height: 16px; }
.hint.one { margin-bottom: 23px; }
.select { justify-content: space-between; margin-top: 12px; }
.select svg { width: 12px; height: 12px; margin-right: -1px; stroke: #535158; stroke-width: 2; }
.exp { margin-top: 19px; }
.date { width: 300px; margin-top: 9px; padding-bottom: 3px; }
.date span { width: 225px; flex: none; }
.date svg { width: 20px; height: 20px; }
.date svg.cal { width: 18px; height: 18px; margin-left: 11px; stroke: #535158; stroke-width: 1.600; }
.pbar { width: 21px; flex: none; background: #f1f1f1; padding: 0 2px; display: flex; flex-direction: column; }
.pbar .up { height: 99px; }
.pbar .thumb { height: 557px; flex: none; background: #c1c1c1; }
.pbar .down { height: 223px; padding-top: 201px; }
.pbar .down.on::before { background: #505050; }

/* Windows taskbar */
.task { height: 60px; flex: none; background: #202020; border-top: 1px solid #3c3e3c; display: flex; align-items: center; color: #fff; font-size: 14.500px; position: relative; }
.weather { display: flex; align-items: center; gap: 5px; width: 493px; padding-left: 25px; }
.weather svg { width: 34px; height: 38px; }
.weather div, .lang, .clock { display: flex; flex-direction: column; line-height: 20px; padding-bottom: 2px; }
.mut { color: #c5c5c5; }
.apps { display: flex; align-items: center; }
.start { width: 29px; height: 29px; margin-right: 17px; }
.pill { width: 275px; height: 40px; border-radius: 20px; background: #404040; border: 1px solid #515151; display: flex; align-items: center; padding-left: 14px; color: #d4d4d4; font-size: 16.500px; }
.pill span { width: 163px; margin-left: 13px; letter-spacing: -.2px; }
.mag { width: 18px; height: 18px; stroke: #d8d8d8; stroke-width: 2; }
.desk { width: 58px; height: 30px; margin-left: -1px; }
.tv { width: 30px; height: 28px; margin: 0 70px 0 15px; }
.app { width: 50px; height: 50px; margin-right: 5px; border-radius: 6px; display: grid; justify-items: center; align-content: end; grid-template-rows: 30px 9px; padding-bottom: 1px; }
.app svg { width: 30px; height: 30px; overflow: visible; }
.app.sel { background: #2d2d2d; box-shadow: inset -6px 0 #292929; border-right: 1px solid #3a3a3a; }
.app i { grid-row: 2; align-self: end; width: 8px; height: 4px; border-radius: 2px; background: #9a9a9a; }
.app.sel i { width: 20px; background: #b8b8b8; }
.tray { margin-left: auto; display: flex; align-items: center; padding-right: 24px; }
.chev { width: 14px; height: 8px; stroke: #fff; stroke-width: 1.700; }
.cl { width: 21px; height: 18px; margin: 2px 20px 0 22px; }
.lang { width: 36px; text-align: center; letter-spacing: -.1px; }
.tr { width: 20px; height: 18px; margin-left: 10px; stroke: #fff; stroke-width: 1.400; }
.lang + .tr { margin-left: 19px; }
.clock { width: 98px; text-align: right; letter-spacing: .180px; }
.bell { width: 17px; height: 19px; margin: 0 22px 0 11px; }
.cop { width: 30px; height: 28px; }
```
